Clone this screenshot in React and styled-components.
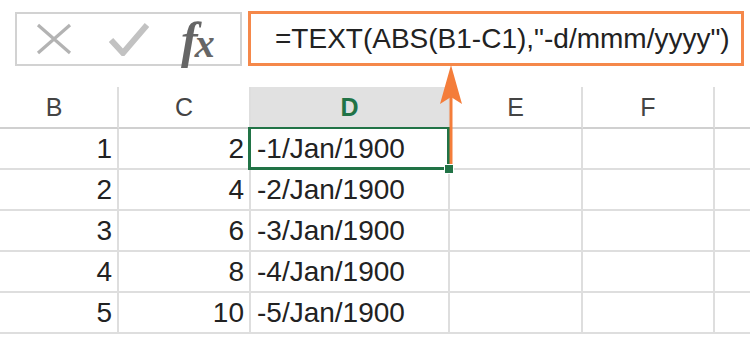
import React from 'react';
import styled, { createGlobalStyle } from 'styled-components';

const GlobalStyle = createGlobalStyle`
  body {
    margin: 0;
    background: #fff;
    overflow: hidden;
  }
`;

const columns = [
  { name: 'B', width: 128 },
  { name: 'C', width: 132 },
  { name: 'D', width: 199 },
  { name: 'E', width: 133 },
  { name: 'F', width: 132 },
  { name: '', width: 60 },
];

const rows = [
  [1, 2, '-1/Jan/1900'],
  [2, 4, '-2/Jan/1900'],
  [3, 6, '-3/Jan/1900'],
  [4, 8, '-4/Jan/1900'],
  [5, 10, '-5/Jan/1900'],
];

const App = () => {
  return (
    <Page>
      <GlobalStyle />
      <Toolbar>
        <ButtonsBox>
          <IconSlot>
            <svg width="38" height="32" viewBox="0 0 38 32">
              <path d="M3 2 L35 30 M35 2 L3 30" stroke="#b3b3b3" strokeWidth="3.2" fill="none" />
            </svg>
          </IconSlot>
          <IconSlot>
            <svg width="40" height="34" viewBox="0 0 40 34">
              <path d="M2 18 L14 31 L38 3" stroke="#c2c2c2" strokeWidth="6" fill="none" />
            </svg>
          </IconSlot>
          <Fx>
            <i>f</i>
            <i>x</i>
          </Fx>
        </ButtonsBox>
        <FormulaBox>=TEXT(ABS(B1-C1),"-d/mmm/yyyy")</FormulaBox>
      </Toolbar>
      <Sheet>
        <Row header>
          {columns.map((c, i) => (
            <HeaderCell key={i} w={c.width} selected={c.name === 'D'}>
              {c.name}
            </HeaderCell>
          ))}
        </Row>
        {rows.map((r, i) => (
          <Row key={i}>
            <Cell w={128} align="right">{r[0]}</Cell>
            <Cell w={132} align="right">{r[1]}</Cell>
            <Cell w={199} active={i === 0}>
              {r[2]}
              {i === 0 && <FillHandle />}
            </Cell>
            <Cell w={133} />
            <Cell w={132} />
            <Cell w={60} />
          </Row>
        ))}
      </Sheet>
      <Arrow width="26" height="108" viewBox="0 0 26 108">
        <path d="M13 30 L13 106" stroke="#f47d3a" strokeWidth="3" />
        <path d="M13 1 L24 40 L13 33 L2 40 Z" fill="#f47d3a" />
      </Arrow>
    </Page>
  );
};

const Page = styled.div`
  position: relative;
  width: 750px;
  height: 337px;
  overflow: hidden;
  font-family: "Liberation Sans", Arial, sans-serif;
  color: #2b2b2b;
`;

const Toolbar = styled.div`
  display: flex;
  align-items: flex-start;
  gap: 6px;
  height: 87px;
  box-sizing: border-box;
  padding: 11px 0 0 15px;
`;

const ButtonsBox = styled.div`
  display: flex;
  align-items: center;
  width: 227px;
  height: 54px;
  margin-top: 1px;
  box-sizing: border-box;
  border: 2px solid #d2d2d2;
  padding: 0 0 0 18px;
`;

const IconSlot = styled.div`
  display: flex;
  align-items: center;
  margin-right: 36px;
  &:nth-child(2) {
    margin-right: 32px;
  }
`;

const Fx = styled.div`
  font-family: "Liberation Serif", "Times New Roman", serif;
  font-size: 50px;
  font-weight: 700;
  color: #666;
  letter-spacing: -3px;
  line-height: 1;
  margin-top: 2px;
  i:last-child {
    font-size: 40px;
  }
`;

const FormulaBox = styled.div`
  width: 496px;
  height: 55px;
  box-sizing: border-box;
  border: 3px solid #f5884a;
  padding: 0 0 0 24px;
  display: flex;
  align-items: center;
  font-size: 28px;
  white-space: nowrap;
  color: #222;
`;

const Sheet = styled.div`
  margin-left: -9px;
`;

const Row = styled.div`
  display: flex;
  height: ${(p) => (p.header ? 42 : 41)}px;
`;

const HeaderCell = styled.div`
  flex: 0 0 ${(p) => p.w}px;
  box-sizing: border-box;
  display: flex;
  align-items: center;
  justify-content: center;
  font-size: 25px;
  color: ${(p) => (p.selected ? '#217346' : '#444')};
  font-weight: ${(p) => (p.selected ? 700 : 400)};
  background: ${(p) => (p.selected ? '#e1e1e1' : '#fff')};
  border-right: 2px solid #dedede;
  border-bottom: 2px solid ${(p) => (p.selected ? '#217346' : '#d0d0d0')};
`;

const Cell = styled.div`
  position: relative;
  flex: 0 0 ${(p) => p.w}px;
  box-sizing: border-box;
  display: flex;
  align-items: center;
  justify-content: ${(p) => (p.align === 'right' ? 'flex-end' : 'flex-start')};
  padding: ${(p) => (p.align === 'right' ? '0 5px 0 0' : '0 0 0 6px')};
  font-size: 28px;
  color: #222;
  border-right: 2px solid #dedede;
  border-bottom: 2px solid #dedede;
  &::after {
    content: '';
    display: ${(p) => (p.active ? 'block' : 'none')};
    position: absolute;
    top: -2px;
    left: -3px;
    right: -2px;
    bottom: -2px;
    border: 3px solid #217346;
    border-top: none;
  }
`;

const FillHandle = styled.span`
  position: absolute;
  right: -6px;
  bottom: -6px;
  width: 8px;
  height: 8px;
  background: #217346;
  border: 1px solid #fff;
  z-index: 2;
`;

const Arrow = styled.svg`
  position: absolute;
  left: 438px;
  top: 64px;
`;

export default App;
